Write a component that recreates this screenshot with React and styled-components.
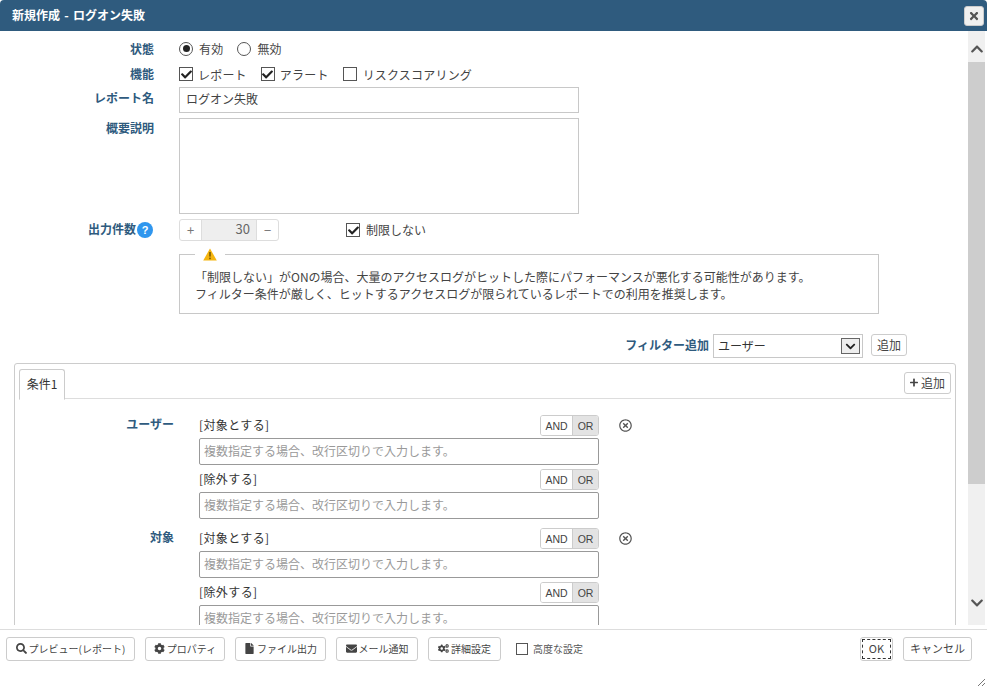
import React from "react";
import styled, { createGlobalStyle } from "styled-components";
import {
  FaChevronUp,
  FaChevronDown,
  FaCheck,
  FaPlus,
  FaTimes,
  FaSearch,
  FaCog,
  FaCogs,
  FaFile,
  FaEnvelope,
  FaRegTimesCircle,
} from "react-icons/fa";

const Global = createGlobalStyle`
  html, body { margin: 0; padding: 0; background: #fff; }
  body {
    font-family: "Noto Sans CJK JP", "Liberation Sans", sans-serif;
    font-size: 12px;
    color: #444;
  }
  * { box-sizing: border-box; }
`;

const Dialog = styled.div`
  width: 987px;
  height: 688px;
  display: flex;
  flex-direction: column;
  background: #fff;
  overflow: hidden;
  position: relative;
`;

const TitleBar = styled.div`
  height: 31px;
  flex: none;
  background: #2f5b7e;
  border-radius: 4px 4px 0 0;
  display: flex;
  align-items: center;
  justify-content: space-between;
  padding: 0 3px 0 12px;
  color: #fff;
  font-weight: 700;
  font-size: 12px;
  word-spacing: 1.5px;
`;

const TitleText = styled.span`
  padding-bottom: 2px;
`;

const CloseButton = styled.div`
  width: 20px;
  height: 20px;
  background: #f0f0f0;
  border: 1px solid #ccc;
  border-radius: 3px;
  display: flex;
  align-items: center;
  justify-content: center;
  color: #555;
  font-size: 12px;
`;

const Middle = styled.div`
  height: 594px;
  flex: none;
  display: flex;
  padding-right: 2px;
`;

const Content = styled.div`
  flex: 1;
  min-width: 0;
  overflow: hidden;
  padding: 5px 13px 0 14px;
`;

const ScrollBar = styled.div`
  width: 17px;
  flex: none;
  background: #f0f0f0;
  display: flex;
  flex-direction: column;
  align-items: center;
  color: #555;
  font-size: 14px;
`;

const ScrollArrow = styled.div`
  height: 31px;
  flex: none;
  display: flex;
  align-items: center;
  justify-content: center;
  padding: ${(p) => (p.$down ? "0 0 14px" : "5px 0 0")};
`;

const ScrollThumb = styled.div`
  width: 100%;
  height: 422px;
  flex: none;
  background: #cdcdcd;
`;

const ScrollTrack = styled.div`
  flex: 1;
`;

const FormRow = styled.div`
  display: grid;
  grid-template-columns: 140px 1fr;
  column-gap: 25px;
  align-items: ${(p) => (p.$top ? "start" : "center")};
  min-height: ${(p) => p.$h || 25}px;
  margin-bottom: ${(p) => p.$mb || 0}px;
`;

const Label = styled.div`
  color: #2f5b7e;
  font-weight: 700;
  text-align: right;
  font-size: 12px;
  padding-top: ${(p) => p.$pt || 0}px;
  padding-bottom: ${(p) => p.$pb || 0}px;
  display: flex;
  justify-content: flex-end;
  align-items: center;
  gap: 1px;
`;

const Options = styled.div`
  display: flex;
  align-items: center;
  letter-spacing: 0.2px;
`;

const Option = styled.div`
  display: flex;
  align-items: center;
  gap: ${(p) => p.$gap || 6}px;
  margin-right: ${(p) => p.$mr || 0}px;
`;

const Radio = styled.span`
  width: 14px;
  height: 14px;
  border: 1px solid #555;
  border-radius: 50%;
  display: inline-flex;
  align-items: center;
  justify-content: center;
  background: #fff;
  &::after {
    content: "";
    width: 7px;
    height: 7px;
    border-radius: 50%;
    background: ${(p) => (p.$on ? "#222" : "transparent")};
  }
`;

const Check = styled.span`
  width: 14px;
  height: 14px;
  border: 1px solid #555;
  background: #fff;
  display: inline-flex;
  align-items: center;
  justify-content: center;
  color: #222;
  font-size: 11px;
  flex: none;
`;

const TextInput = styled.input`
  width: 400px;
  height: 26px;
  border: 1px solid #c8c8c8;
  padding: 0 6px 3px;
  font: inherit;
  color: #444;
  outline: none;
  display: block;
`;

const TextArea = styled.div`
  width: 400px;
  height: 96px;
  border: 1px solid #c8c8c8;
`;

const Help = styled.span`
  width: 16px;
  height: 16px;
  margin: 3px 1px 0 0;
  border-radius: 50%;
  background: #2f96ee;
  color: #fff;
  font-size: 11px;
  font-weight: 700;
  font-family: "Liberation Sans", sans-serif;
  display: inline-flex;
  align-items: center;
  justify-content: center;
`;

const Spinner = styled.div`
  width: 100px;
  height: 22px;
  border: 1px solid #ddd;
  border-radius: 3px;
  display: flex;
  color: #777;
  font-size: 13px;
`;

const SpinButton = styled.div`
  width: 21px;
  display: flex;
  align-items: center;
  justify-content: center;
  padding-bottom: 1px;
`;

const SpinValue = styled.div`
  flex: 1;
  background: #eee;
  border-left: 1px solid #ddd;
  border-right: 1px solid #ddd;
  text-align: right;
  padding-right: 6px;
  line-height: 17px;
  color: #666;
`;

const LimitRow = styled.div`
  display: flex;
  align-items: center;
  gap: 67px;
`;

const LimitText = styled.span`
  padding-bottom: 2px;
`;

const Warning = styled.fieldset`
  width: 700px;
  height: 68px;
  margin: 5px 0 20px 165px;
  padding: 6px 15px 0;
  border: 1px solid #c8c8c8;
  line-height: 17px;
  min-inline-size: 0;

  legend {
    margin-left: 0;
    padding: 0 8px;
    height: 16px;
    display: flex;
    align-items: center;
  }
`;

const WarningLine = styled.div`
  white-space: nowrap;
  font-size: 12px;
  color: #444;
`;

const FilterBar = styled.div`
  display: flex;
  justify-content: flex-end;
  align-items: flex-start;
  gap: 4px;
  padding-right: 48px;
  height: 25px;
`;

const FilterSelect = styled.div`
  width: 150px;
  height: 24px;
  border: 1px solid #c8c8c8;
  display: flex;
  align-items: center;
  justify-content: space-between;
  padding: 0 2px 0 4px;
  color: #333;
`;

const SelectText = styled.span`
  padding-bottom: 2px;
`;

const SelectArrow = styled.span`
  width: 19px;
  height: 16px;
  border: 1px solid #666;
  background: #eee;
  display: flex;
  align-items: center;
  justify-content: center;
  font-size: 11px;
  color: #222;
`;

const Button = styled.div`
  width: ${(p) => (p.$w ? `${p.$w}px` : "auto")};
  height: ${(p) => p.$h || 24}px;
  padding: 0 ${(p) => p.$px ?? 5}px 2px;
  margin-left: ${(p) => p.$ml || 0}px;
  margin-top: ${(p) => p.$mt || 0}px;
  border: 1px solid #ccc;
  border-radius: 3px;
  background: #fff;
  display: inline-flex;
  align-items: center;
  justify-content: center;
  gap: ${(p) => p.$gap || 2}px;
  color: #444;
  font-size: ${(p) => p.$fs || 12}px;
  white-space: nowrap;
  flex: none;
  svg { color: #444; font-size: 11px; }
`;

const Panel = styled.div`
  margin-top: 4px;
  width: 942px;
  border: 1px solid #ccc;
  border-radius: 3px 3px 0 0;
  padding: 4px 4px 0;
  height: 300px;
`;

const TabBar = styled.div`
  height: 31px;
  border-bottom: 1px solid #ddd;
  display: flex;
  justify-content: space-between;
  align-items: flex-start;
`;

const Tab = styled.div`
  width: 46px;
  height: 31px;
  margin-top: 1px;
  border: 1px solid #ccc;
  border-bottom-color: #fff;
  border-radius: 3px 3px 0 0;
  background: #fff;
  display: flex;
  align-items: center;
  justify-content: center;
  padding-bottom: 2px;
  color: #333;
`;

const Conditions = styled.div`
  padding-top: 16px;
`;

const Condition = styled.div`
  display: grid;
  grid-template-columns: 180px 400px 26px;
  margin-bottom: 5px;
`;

const ConditionLabel = styled.div`
  color: #2f5b7e;
  font-weight: 700;
  text-align: right;
  padding-right: 25px;
  line-height: 18px;
`;

const Fields = styled.div`
  display: flex;
  flex-direction: column;
`;

const FieldHead = styled.div`
  height: 21px;
  display: flex;
  justify-content: space-between;
  align-items: center;
  margin-bottom: 2px;
  color: #333;
`;

const FieldTitle = styled.span`
  padding-bottom: 2px;
  letter-spacing: 0.4px;
`;

const Toggle = styled.div`
  display: flex;
  height: 21px;
  border: 1px solid #ccc;
  border-radius: 3px;
  overflow: hidden;
  font-family: "Liberation Sans", sans-serif;
  font-size: 10.5px;
`;

const ToggleItem = styled.span`
  width: ${(p) => (p.$on ? 26 : 31)}px;
  display: flex;
  align-items: center;
  justify-content: center;
  background: ${(p) => (p.$on ? "#e3e3e3" : "#fff")};
  border-left: ${(p) => (p.$on ? "1px solid #ccc" : "0")};
  color: #444;
`;

const CondInput = styled.input`
  width: 400px;
  height: 27px;
  margin-bottom: 4px;
  border: 1px solid #999;
  border-radius: 2px;
  padding: 0 4px 2px;
  font: inherit;
  outline: none;
  &::placeholder { color: #999; }
`;

const RemoveIcon = styled.div`
  padding: 4px 0 0 20px;
  color: #555;
  font-size: 13px;
  line-height: 0;
`;

const Footer = styled.div`
  flex: 1;
  margin-top: 4px;
  border-top: 1px solid #ddd;
  padding: 7px 15px 0 6px;
  display: flex;
  align-items: flex-start;
  justify-content: space-between;
`;

const FooterGroup = styled.div`
  display: flex;
  align-items: center;
  gap: 10px;
`;

const AdvancedOption = styled.div`
  display: flex;
  align-items: center;
  gap: 5px;
  margin-left: 5px;
  padding-bottom: 1px;
  font-size: 10px;
  color: #555;
  height: 24px;
`;

const SmallCheck = styled(Check)`
  width: 12px;
  height: 12px;
`;

const OkButton = styled(Button)`
  position: relative;
  &::after {
    content: "";
    position: absolute;
    inset: 1px;
    border: 1px dashed #333;
  }
`;

const Grip = styled.svg`
  position: absolute;
  right: 1px;
  bottom: 1px;
`;

const PLACEHOLDER = "複数指定する場合、改行区切りで入力します。";

const fieldNames = ["[対象とする]", "[除外する]"];

const conditions = [{ name: "ユーザー" }, { name: "対象" }];

const footerButtons = [
  { icon: <FaSearch />, label: "プレビュー(レポート)", w: 129 },
  { icon: <FaCog />, label: "プロパティ", w: 80 },
  { icon: <FaFile />, label: "ファイル出力", w: 91 },
  { icon: <FaEnvelope />, label: "メール通知", w: 82 },
  { icon: <FaCogs />, label: "詳細設定", w: 73 },
];

const WarnIcon = () => (
  <svg width="14" height="13" viewBox="0 0 14 13">
    <path d="M7 0.5 L13.8 12.5 H0.2 Z" fill="#f5b50f" />
    <rect x="6.2" y="4" width="1.6" height="4.6" fill="#7a5a00" />
    <rect x="6.2" y="9.6" width="1.6" height="1.6" fill="#7a5a00" />
  </svg>
);

const App = () => (
  <Dialog>
    <Global />
    <TitleBar>
      <TitleText>新規作成 - ログオン失敗</TitleText>
      <CloseButton>
        <FaTimes />
      </CloseButton>
    </TitleBar>
    <Middle>
      <Content>
        <FormRow>
          <Label>状態</Label>
          <Options>
            <Option $mr={14}>
              <Radio $on />
              有効
            </Option>
            <Option>
              <Radio />
              無効
            </Option>
          </Options>
        </FormRow>
        <FormRow $h={26}>
          <Label $pb={1}>機能</Label>
          <Options>
            <Option $gap={5} $mr={14}>
              <Check>
                <FaCheck />
              </Check>
              レポート
            </Option>
            <Option $gap={5} $mr={14}>
              <Check>
                <FaCheck />
              </Check>
              アラート
            </Option>
            <Option>
              <Check />
              リスクスコアリング
            </Option>
          </Options>
        </FormRow>
        <FormRow $h={26} $mb={5}>
          <Label $pb={6}>レポート名</Label>
          <TextInput readOnly value="ログオン失敗" />
        </FormRow>
        <FormRow $top $h={96} $mb={5}>
          <Label $pt={1}>概要説明</Label>
          <TextArea />
        </FormRow>
        <FormRow $h={22}>
          <Label $pb={3}>
            出力件数
            <Help>?</Help>
          </Label>
          <LimitRow>
            <Spinner>
              <SpinButton>+</SpinButton>
              <SpinValue>30</SpinValue>
              <SpinButton>−</SpinButton>
            </Spinner>
            <Option>
              <Check>
                <FaCheck />
              </Check>
              <LimitText>制限しない</LimitText>
            </Option>
          </LimitRow>
        </FormRow>
        <Warning>
          <legend>
            <WarnIcon />
          </legend>
          <WarningLine>「制限しない」がONの場合、大量のアクセスログがヒットした際にパフォーマンスが悪化する可能性があります。</WarningLine>
          <WarningLine>フィルター条件が厳しく、ヒットするアクセスログが限られているレポートでの利用を推奨します。</WarningLine>
        </Warning>
        <FilterBar>
          <Label $pt={2}>フィルター追加</Label>
          <FilterSelect>
            <SelectText>ユーザー</SelectText>
            <SelectArrow>
              <FaChevronDown />
            </SelectArrow>
          </FilterSelect>
          <Button $h={22} $ml={4} $w={36}>
            追加
          </Button>
        </FilterBar>
        <Panel>
          <TabBar>
            <Tab>条件1</Tab>
            <Button $h={22} $w={47} $mt={4} $gap={3}>
              <FaPlus />
              追加
            </Button>
          </TabBar>
          <Conditions>
            {conditions.map((c) => (
              <Condition key={c.name}>
                <ConditionLabel>{c.name}</ConditionLabel>
                <Fields>
                  {fieldNames.map((f) => (
                    <React.Fragment key={f}>
                      <FieldHead>
                        <FieldTitle>{f}</FieldTitle>
                        <Toggle>
                          <ToggleItem>AND</ToggleItem>
                          <ToggleItem $on>OR</ToggleItem>
                        </Toggle>
                      </FieldHead>
                      <CondInput readOnly placeholder={PLACEHOLDER} />
                    </React.Fragment>
                  ))}
                </Fields>
                <RemoveIcon>
                  <FaRegTimesCircle />
                </RemoveIcon>
              </Condition>
            ))}
          </Conditions>
        </Panel>
      </Content>
      <ScrollBar>
        <ScrollArrow>
          <FaChevronUp />
        </ScrollArrow>
        <ScrollThumb />
        <ScrollTrack />
        <ScrollArrow $down>
          <FaChevronDown />
        </ScrollArrow>
      </ScrollBar>
    </Middle>
    <Footer>
      <FooterGroup>
        {footerButtons.map((b) => (
          <Button key={b.label} $fs={10} $w={b.w} $px={0}>
            {b.icon}
            {b.label}
          </Button>
        ))}
        <AdvancedOption>
          <SmallCheck />
          高度な設定
        </AdvancedOption>
      </FooterGroup>
      <FooterGroup>
        <OkButton $fs={11} $w={33} $px={0}>
          OK
        </OkButton>
        <Button $fs={11} $w={69} $px={0}>
          キャンセル
        </Button>
      </FooterGroup>
    </Footer>
    <Grip width="10" height="10" viewBox="0 0 10 10">
      <path d="M2 9 L9 2 M6 9 L9 6" stroke="#777" strokeWidth="1" />
    </Grip>
  </Dialog>
);

export default App;
